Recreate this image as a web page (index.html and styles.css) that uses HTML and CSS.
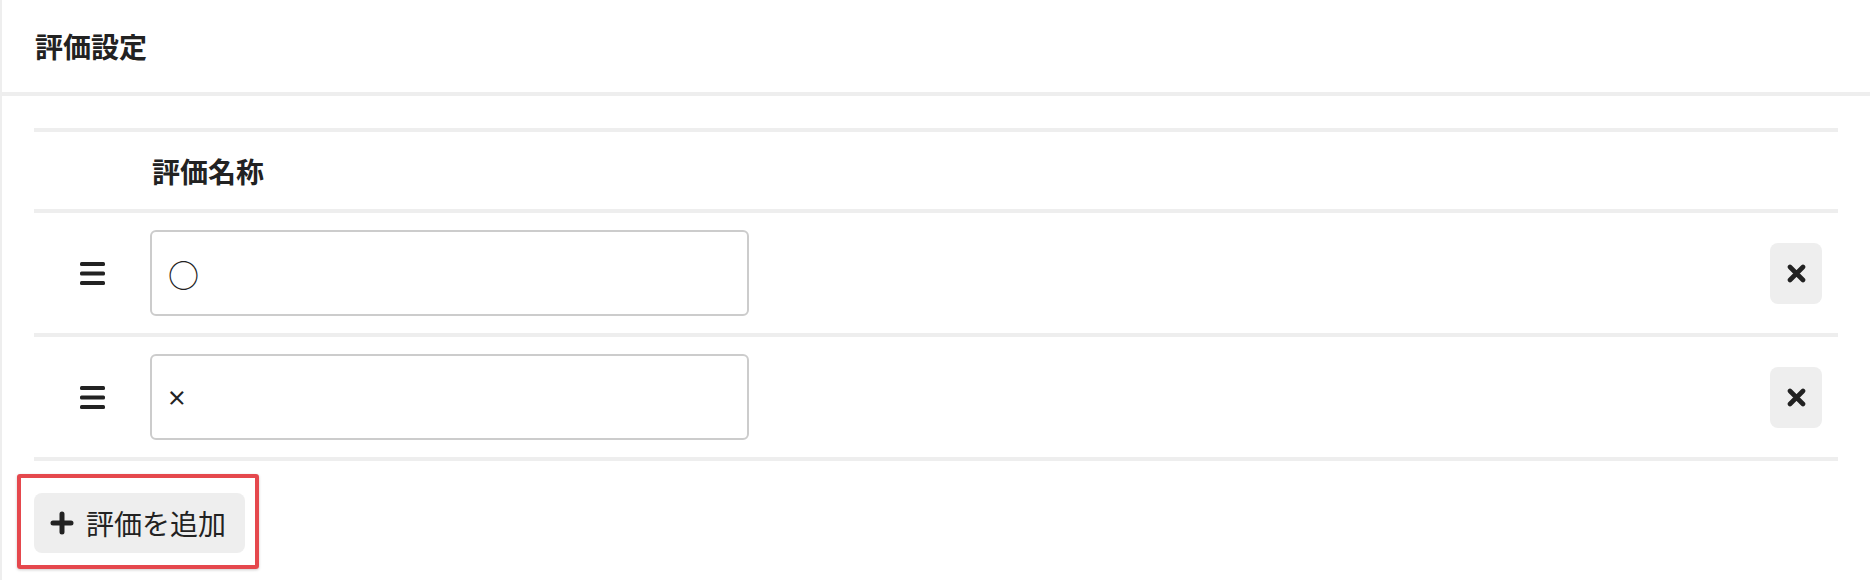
FILE: index.html
```html
<!DOCTYPE html>
<html lang="ja">
<head>
<meta charset="utf-8">
<title>評価設定</title>
<link rel="stylesheet" href="styles.css">
</head>
<body>
<div class="page">
  <header class="header"><h1 class="title">評価設定</h1></header>
  <main class="content">
    <div class="table">
      <div class="trow head-row">
        <div class="cell-handle"></div>
        <div class="cell-name head-label">評価名称</div>
        <div class="cell-spacer"></div>
        <div class="cell-action"></div>
      </div>
      <div class="trow item-row">
        <div class="cell-handle">
          <svg class="bars" width="25" height="23" viewBox="0 0 25 23"><rect x="0" y="0" width="25" height="4" rx="1.5"/><rect x="0" y="9.5" width="25" height="4" rx="1.5"/><rect x="0" y="19" width="25" height="4" rx="1.5"/></svg>
        </div>
        <div class="cell-name"><input class="name-input" type="text" value="○"></div>
        <div class="cell-spacer"></div>
        <div class="cell-action">
          <button class="del-btn" type="button"><svg width="19" height="19" viewBox="0 0 19 19"><path d="M3 3L16 16M16 3L3 16" stroke="#222" stroke-width="4.6" stroke-linecap="round"/></svg></button>
        </div>
      </div>
      <div class="trow item-row">
        <div class="cell-handle">
          <svg class="bars" width="25" height="23" viewBox="0 0 25 23"><rect x="0" y="0" width="25" height="4" rx="1.5"/><rect x="0" y="9.5" width="25" height="4" rx="1.5"/><rect x="0" y="19" width="25" height="4" rx="1.5"/></svg>
        </div>
        <div class="cell-name"><input class="name-input" type="text" value="×"></div>
        <div class="cell-spacer"></div>
        <div class="cell-action">
          <button class="del-btn" type="button"><svg width="19" height="19" viewBox="0 0 19 19"><path d="M3 3L16 16M16 3L3 16" stroke="#222" stroke-width="4.6" stroke-linecap="round"/></svg></button>
        </div>
      </div>
    </div>
    <div class="add-wrap">
      <button class="add-btn" type="button"><svg width="24" height="24" viewBox="0 0 24 24"><path d="M12 3V21M3 12H21" stroke="#222" stroke-width="5" stroke-linecap="round"/></svg><span>評価を追加</span></button>
      <div class="highlight"></div>
    </div>
  </main>
</div>
</body>
</html>
```
FILE: styles.css
```css
* { box-sizing: border-box; }
html, body { margin: 0; padding: 0; background: #fff; }
body {
  font-family: "Noto Sans CJK JP", "Noto Sans", sans-serif;
  color: #222;
}
.page {
  border-left: 2px solid #eee;
  min-height: 100vh;
}
.header {
  height: 96px;
  padding-left: 33px;
  display: flex;
  align-items: center;
  border-bottom: 4px solid #eee;
}
.title {
  margin: 0;
  font-size: 28px;
  font-weight: 700;
  line-height: 1;
  color: #222;
}
.content {
  padding: 32px 32px 40px 32px;
}
.table {
  border-top: 4px solid #eee;
}
.trow {
  display: grid;
  grid-template-columns: 116px 600px 1fr auto;
  align-items: center;
  border-bottom: 4px solid #eee;
}
.head-row { height: 81px; }
.item-row { height: 124px; }
.head-label {
  font-size: 28px;
  font-weight: 700;
  line-height: 1;
  padding-left: 2px;
}
.cell-handle {
  display: flex;
  justify-content: center;
  align-items: center;
}
.bars rect { fill: #222; }
.name-input {
  display: block;
  width: 599px;
  height: 86px;
  border: 2px solid #ccc;
  border-radius: 6px;
  padding: 0 16px;
  font-family: "Open Sans", "Noto Sans CJK JP", sans-serif;
  font-size: 31px;
  color: #222;
  background: #fff;
  outline: none;
}
.cell-action {
  padding-right: 16px;
  display: flex;
  align-items: center;
}
.del-btn {
  width: 52px;
  height: 61px;
  border: none;
  border-radius: 8px;
  background: #eee;
  display: flex;
  align-items: center;
  justify-content: center;
  padding: 0;
  cursor: pointer;
}
.add-wrap {
  position: relative;
  display: inline-block;
  margin-top: 32px;
}
.add-btn {
  display: flex;
  align-items: center;
  gap: 12px;
  width: 211px;
  height: 60px;
  padding: 0 0 0 16px;
  border: none;
  border-radius: 8px;
  background: #eee;
  font-family: "Noto Sans CJK JP", "Noto Sans", sans-serif;
  font-size: 28px;
  color: #222;
  cursor: pointer;
}
.add-btn span { line-height: 1; }
.highlight {
  position: absolute;
  left: -17px;
  top: -19px;
  right: -14px;
  bottom: -16px;
  border: 4px solid #e5484d;
  border-radius: 3px;
  box-shadow: 0 1px 3px rgba(0,0,0,0.2);
  pointer-events: none;
}
```
